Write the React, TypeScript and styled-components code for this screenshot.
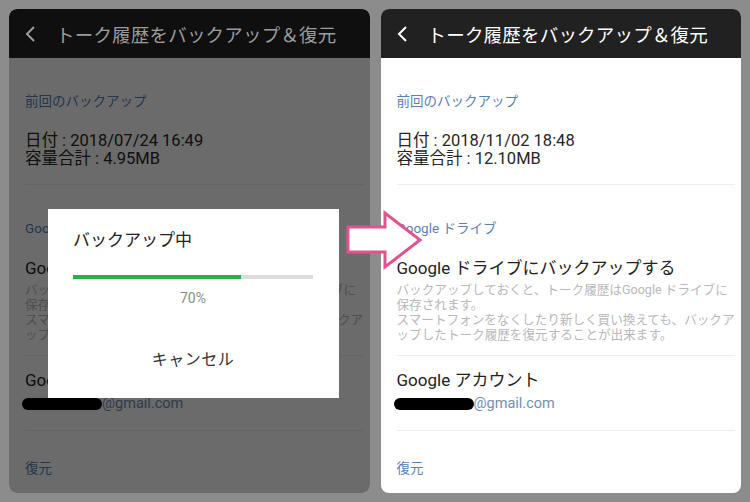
import React from "react";
import styled, { createGlobalStyle } from "styled-components";

const GlobalStyle = createGlobalStyle`
  html, body {
    margin: 0;
    padding: 0;
  }
  body {
    font-family: Roboto, "Noto Sans CJK JP", sans-serif;
    background: #8c8c8c;
  }
`;

interface DimProps {
  $dim?: boolean;
}

const Page = styled.div`
  position: relative;
  box-sizing: border-box;
  width: 750px;
  height: 502px;
  padding: 9px 9px 9px 9px;
  display: flex;
  gap: 11px;
  background: #8c8c8c;
`;

const Phone = styled.div`
  position: relative;
  flex: 1;
  display: flex;
  flex-direction: column;
  height: 484px;
  border-radius: 8px;
  overflow: hidden;
  background: #ffffff;
`;

const Header = styled.div<DimProps>`
  height: 49px;
  flex-shrink: 0;
  display: flex;
  align-items: center;
  gap: 19px;
  padding-left: 16px;
  background: ${(p) => (p.$dim ? "#0f0f0f" : "#212121")};
  color: ${(p) => (p.$dim ? "#9c9c9c" : "#ffffff")};
  font-size: 18.5px;
  letter-spacing: 0.2px;
`;

const Back = styled.svg`
  width: 12px;
  height: 16px;
  fill: none;
  stroke: currentColor;
  stroke-width: 2px;
`;

const Body = styled.div`
  flex: 1;
  padding: 0 6px 0 16px;
  color: #222;
`;

const Label = styled.div<{ $top: number }>`
  margin-top: ${(p) => p.$top}px;
  font-size: 13.5px;
  line-height: 18px;
  color: #5a80b6;
`;

const Info = styled.div`
  margin-top: 22px;
  font-size: 16.5px;
  line-height: 18px;
  color: #262626;
`;

const Divider = styled.div<{ $top: number }>`
  margin-top: ${(p) => p.$top}px;
  height: 1px;
  background: #eeeeee;
`;

const ItemTitle = styled.div<{ $top: number }>`
  margin-top: ${(p) => p.$top}px;
  font-size: 17px;
  line-height: 20px;
  color: #222;
`;

const Desc = styled.div`
  margin-top: 3.5px;
  font-size: 12.6px;
  line-height: 15.3px;
  color: #b9b9b9;
  white-space: nowrap;

  span {
    display: block;
  }
`;

const Email = styled.div`
  margin-top: 5px;
  display: flex;
  align-items: center;
  font-size: 14.5px;
  line-height: 18px;
  color: #6f8fb0;
`;

const Redacted = styled.span`
  display: inline-block;
  width: 80px;
  height: 12px;
  margin-left: -3px;
  border-radius: 6px;
  background: #000;
`;

const Shade = styled.div`
  position: absolute;
  left: 0;
  right: 0;
  top: 49px;
  bottom: 0;
  background: rgba(0, 0, 0, 0.58);
`;

const Dialog = styled.div`
  position: absolute;
  left: 39px;
  top: 200px;
  width: 291px;
  height: 189px;
  box-sizing: border-box;
  padding: 21px 25px 0 25px;
  background: #fff;
  display: flex;
  flex-direction: column;
`;

const DialogTitle = styled.div`
  font-size: 17px;
  line-height: 20px;
  color: #222;
`;

const Track = styled.div`
  margin-top: 25px;
  width: 240px;
  height: 4px;
  background: #dcdcdc;
`;

const Fill = styled.div`
  height: 100%;
  background: #21b24b;
`;

const Percent = styled.div`
  margin-top: 11px;
  width: 240px;
  text-align: center;
  font-size: 14px;
  line-height: 16px;
  color: #8a8a8a;
`;

const Cancel = styled.div`
  margin-top: 44px;
  width: 240px;
  text-align: center;
  font-size: 16px;
  line-height: 20px;
  color: #333;
  letter-spacing: 0.5px;
`;

const Arrow = styled.svg`
  position: absolute;
  left: 345px;
  top: 210px;
  width: 80px;
  height: 60px;
  overflow: visible;
`;

interface ScreenProps {
  date: string;
  size: string;
  dim?: boolean;
  children?: React.ReactNode;
}

const Screen = ({ date, size, dim, children }: ScreenProps) => (
  <Phone>
    <Header $dim={dim}>
      <Back viewBox="0 0 12 16">
        <polyline points="9,1 2,8 9,15" />
      </Back>
      <span>トーク履歴をバックアップ＆復元</span>
    </Header>
    <Body>
      <Label $top={34}>前回のバックアップ</Label>
      <Info>
        <div>日付 : {date}</div>
        <div>容量合計 : {size}</div>
      </Info>
      <Divider $top={16} />
      <Label $top={34}>Google ドライブ</Label>
      <ItemTitle $top={21}>Google ドライブにバックアップする</ItemTitle>
      <Desc>
        <span>バックアップしておくと、トーク履歴はGoogle ドライブに</span>
        <span>保存されます。</span>
        <span>スマートフォンをなくしたり新しく買い換えても、バックア</span>
        <span>ップしたトーク履歴を復元することが出来ます。</span>
      </Desc>
      <Divider $top={12} />
      <ItemTitle $top={14}>Google アカウント</ItemTitle>
      <Email>
        <Redacted />
        @gmail.com
      </Email>
      <Divider $top={17} />
      <Label $top={28}>復元</Label>
    </Body>
    {children}
  </Phone>
);

export default function App() {
  const progress = 70;
  return (
    <>
      <GlobalStyle />
      <Page>
        <Screen date="2018/07/24 16:49" size="4.95MB" dim>
          <Shade />
          <Dialog>
            <DialogTitle>バックアップ中</DialogTitle>
            <Track>
              <Fill style={{ width: `${progress}%` }} />
            </Track>
            <Percent>{progress}%</Percent>
            <Cancel>キャンセル</Cancel>
          </Dialog>
        </Screen>
        <Screen date="2018/11/02 18:48" size="12.10MB" />
        <Arrow viewBox="0 0 80 60">
          <polygon
            points="3,17 40,17 40,3 75,30 40,57 40,42 3,42"
            fill="#fff"
            stroke="#e2538d"
            strokeWidth="3"
            strokeLinejoin="miter"
          />
        </Arrow>
      </Page>
    </>
  );
}
